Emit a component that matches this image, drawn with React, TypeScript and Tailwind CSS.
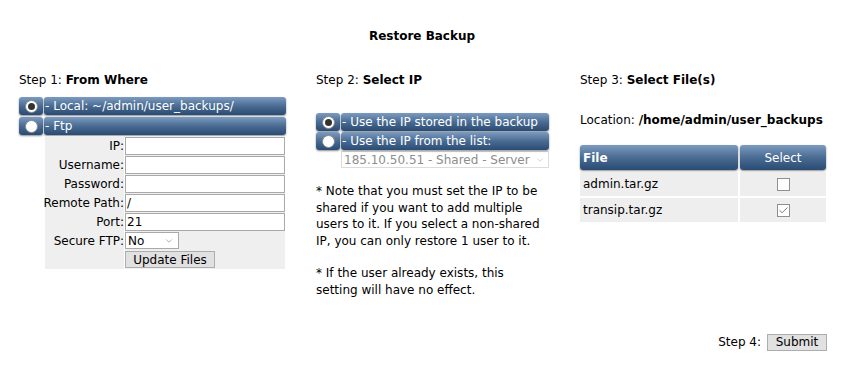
import { Check, ChevronDown } from "lucide-react"

const BAR =
  "rounded-[3px] bg-gradient-to-b from-[#7d9bbf] via-[#4a6c93] to-[#2a4b73] shadow-[0_1px_2px_rgba(0,0,0,0.45)]"

function RadioBar({ label, checked, width }: { label: string; checked?: boolean; width: string }) {
  return (
    <div className={`flex h-[18px] gap-px ${width}`}>
      <div className={`${BAR} flex w-[24px] shrink-0 items-center justify-center`}>
        <span className="flex h-[13px] w-[13px] items-center justify-center rounded-full border border-[#8a8a8a] bg-white">
          {checked ? <span className="h-[7px] w-[7px] rounded-full bg-[#333]" /> : null}
        </span>
      </div>
      <div className={`${BAR} flex flex-1 items-center whitespace-nowrap pl-[1px] text-white`}>- {label}</div>
    </div>
  )
}

function FieldRow({ label, value }: { label: string; value?: string }) {
  return (
    <div className="flex h-[19px] gap-px">
      <div className="flex w-[79px] items-center justify-end whitespace-nowrap bg-[#efefef]">{label}:</div>
      <div className="flex flex-1 items-center bg-[#efefef]">
        <div className="flex h-[18px] w-[160px] items-center border border-[#a9a9a9] bg-white pl-[1px]">
          {value}
        </div>
      </div>
    </div>
  )
}

export default function App() {
  return (
    <div
      className="flex h-[371px] w-[844px] flex-col bg-white text-[12px] text-black"
      style={{ fontFamily: '"DejaVu Sans", Verdana, sans-serif' }}
    >
      <div className="pt-[27px] text-center font-bold">Restore Backup</div>

      <div className="mt-[26px] flex pl-[19px]">
        {/* step 1 */}
        <div className="w-[268px]">
          <p>
            Step 1: <b>From Where</b>
          </p>
          <div className="mt-[8px] flex flex-col gap-[2px]">
            <RadioBar label="Local: ~/admin/user_backups/" checked width="w-[267px]" />
            <RadioBar label="Ftp" width="w-[267px]" />
          </div>
          <div className="ml-[26px] mt-[1px] flex w-[240px] flex-col gap-0">
            <FieldRow label="IP" />
            <FieldRow label="Username" />
            <FieldRow label="Password" />
            <FieldRow label="Remote Path" value="/" />
            <FieldRow label="Port" value="21" />
            <div className="flex h-[19px] gap-px">
              <div className="flex w-[79px] items-center justify-end whitespace-nowrap bg-[#efefef]">Secure FTP:</div>
              <div className="flex flex-1 items-center bg-[#efefef]">
                <div className="flex h-[17px] w-[54px] items-center justify-between border border-[#a9a9a9] bg-white pl-[2px] pr-[4px]">
                  No
                  <ChevronDown className="h-[10px] w-[10px] text-[#888]" strokeWidth={1.5} />
                </div>
              </div>
            </div>
            <div className="flex h-[19px] gap-px">
              <div className="w-[79px] bg-[#efefef]" />
              <div className="flex flex-1 items-center bg-[#efefef]">
                <button className="h-[17px] w-[90px] border border-[#adadad] bg-[#e1e1e1] leading-none">
                  Update Files
                </button>
              </div>
            </div>
          </div>
        </div>

        {/* step 2 */}
        <div className="ml-[29px] w-[234px]">
          <p>
            Step 2: <b>Select IP</b>
          </p>
          <div className="mt-[24px] flex flex-col gap-[1px]">
            <RadioBar label="Use the IP stored in the backup" checked width="w-[233px]" />
            <RadioBar label="Use the IP from the list:" width="w-[233px]" />
          </div>
          <div className="ml-[25px] mt-[1px] flex h-[17px] w-[208px] items-center justify-between border border-[#dcdcdc] pl-[2px] pr-[3px] text-[#8d8d8d]">
            185.10.50.51 - Shared - Server
            <ChevronDown className="h-[10px] w-[10px] text-[#bbb]" strokeWidth={1.5} />
          </div>
          <p className="mt-[15px] w-[228px] leading-[16.5px]">
            * Note that you must set the IP to be shared if you want to add multiple users to it. If you
            select a non-shared IP, you can only restore 1 user to it.
          </p>
          <p className="mt-[16px] w-[228px] leading-[16.5px]">
            * If the user already exists, this setting will have no effect.
          </p>
        </div>

        {/* step 3 */}
        <div className="ml-[30px] w-[248px]">
          <p>
            Step 3: <b>Select File(s)</b>
          </p>
          <p className="mt-[22px] whitespace-nowrap">
            Location: <b>/home/admin/user_backups</b>
          </p>
          <div className="mt-[16px] w-[246px]">
            <div className="flex h-[25px] gap-[2px]">
              <div className={`${BAR} flex w-[158px] items-center pl-[3px] font-bold text-white`}>File</div>
              <div className={`${BAR} flex flex-1 items-center justify-center text-white`}>Select</div>
            </div>
            <div className="mt-[2px] flex h-[24px] gap-[2px]">
              <div className="flex w-[158px] items-center bg-[#eeeeee] pl-[3px]">admin.tar.gz</div>
              <div className="flex flex-1 items-center justify-center bg-[#eeeeee]">
                <span className="h-[13px] w-[13px] border border-[#8f8f8f] bg-white" />
              </div>
            </div>
            <div className="mt-[2px] flex h-[24px] gap-[2px]">
              <div className="flex w-[158px] items-center bg-[#eeeeee] pl-[3px]">transip.tar.gz</div>
              <div className="flex flex-1 items-center justify-center bg-[#eeeeee]">
                <span className="flex h-[13px] w-[13px] items-center justify-center border border-[#8f8f8f] bg-white">
                  <Check className="h-[11px] w-[11px] text-[#707070]" strokeWidth={2} />
                </span>
              </div>
            </div>
          </div>
        </div>
      </div>

      <div className="mt-auto flex items-center justify-end gap-[6px] pb-[20px] pr-[17px]">
        <span>Step 4:</span>
        <button className="h-[17px] w-[60px] border border-[#adadad] bg-[#e1e1e1] leading-none">Submit</button>
      </div>
    </div>
  )
}
